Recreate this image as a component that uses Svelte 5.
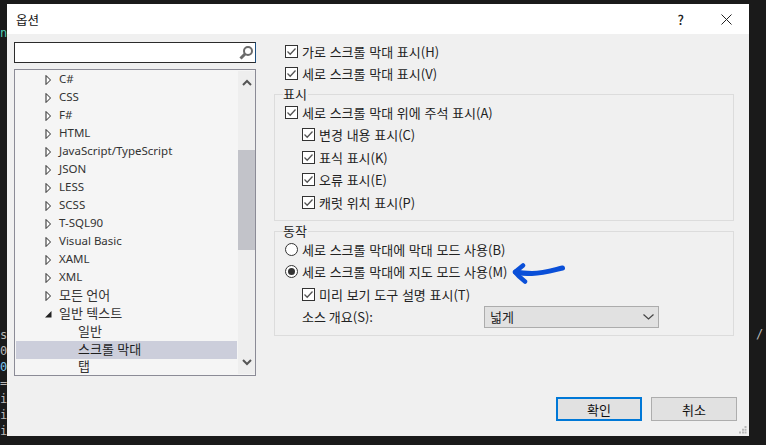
<script lang="ts">
  const languages = ['C#', 'CSS', 'F#', 'HTML', 'JavaScript/TypeScript', 'JSON', 'LESS', 'SCSS', 'T-SQL90', 'Visual Basic', 'XAML', 'XML'];
  const leftGutter = [
    { ch: 'n', y: 26, color: '#4ec9b0' },
    { ch: 's', y: 328, color: '#b8b8b8' },
    { ch: '0', y: 344, color: '#b8b8b8' },
    { ch: '0', y: 360, color: '#7cc4ee' },
    { ch: '=', y: 376, color: '#b8b8b8' },
    { ch: 'i', y: 392, color: '#b8b8b8' },
    { ch: 'i', y: 408, color: '#b8b8b8' },
    { ch: 'i', y: 424, color: '#b8b8b8' }
  ];
  const annotations = ['변경 내용 표시(C)', '표식 표시(K)', '오류 표시(E)', '캐럿 위치 표시(P)'];
</script>

{#snippet check()}
  <svg class="box" width="13" height="13" viewBox="0 0 13 13" aria-hidden="true">
    <rect x="0.5" y="0.5" width="12" height="12" fill="#fff" stroke="#333" />
    <path d="M2.5 6.5 L5.2 9.2 L10.5 3.5" fill="none" stroke="#555" stroke-width="1.3" />
  </svg>
{/snippet}

{#snippet radio(on: boolean)}
  <svg class="box" width="13" height="13" viewBox="0 0 13 13" aria-hidden="true">
    <circle cx="6.5" cy="6.5" r="6" fill="#fff" stroke="#333" />
    {#if on}<circle cx="6.5" cy="6.5" r="3.5" fill="#333" />{/if}
  </svg>
{/snippet}

{#snippet closedTri()}
  <svg class="tri" width="6" height="10" viewBox="0 0 6 10" aria-hidden="true">
    <path d="M0.5 0.5 L5 5 L0.5 9.5 Z" fill="#fff" stroke="#222" />
  </svg>
{/snippet}

<div class="screen">
  {#each leftGutter as g}
    <span class="gutter-ch" style="top: {g.y}px; color: {g.color}">{g.ch}</span>
  {/each}
  <span class="gutter-ch slash">/</span>

  <div class="dialog">
    <header class="titlebar">
      <span class="title">옵션</span>
      <span class="help">?</span>
      <svg class="close" width="11" height="11" viewBox="0 0 11 11" aria-hidden="true">
        <path d="M0.5 0.5 L10.5 10.5 M10.5 0.5 L0.5 10.5" stroke="#222" stroke-width="1" fill="none" />
      </svg>
    </header>

    <div class="body">
      <aside class="left">
        <div class="search">
          <svg width="16" height="16" viewBox="0 0 16 16" aria-hidden="true">
            <circle cx="10" cy="6" r="4" fill="none" stroke="#6b6b6b" stroke-width="2" />
            <path d="M7 9 L2.5 13.5" stroke="#6b6b6b" stroke-width="3" />
          </svg>
        </div>
        <div class="tree">
          <div class="rows">
            {#each languages as lang}
              <div class="row">
                {@render closedTri()}
                <span>{lang}</span>
              </div>
            {/each}
            <div class="row ko">
              {@render closedTri()}
              <span>모든 언어</span>
            </div>
            <div class="row ko">
              <svg class="tri" width="7" height="7" viewBox="0 0 7 7" aria-hidden="true">
                <path d="M6.5 0 V6.500 H0 Z" fill="#222" />
              </svg>
              <span>일반 텍스트</span>
            </div>
            <div class="row ko child"><span>일반</span></div>
            <div class="row ko child selected"><span>스크롤 막대</span></div>
            <div class="row ko child last"><span>탭</span></div>
          </div>
          <div class="scrollbar">
            <svg width="10" height="7" viewBox="0 0 10 7" aria-hidden="true">
              <path d="M1 6 L5 2 L9 6" fill="none" stroke="#555" stroke-width="2" />
            </svg>
            <div class="track"><div class="thumb"></div></div>
            <svg width="10" height="7" viewBox="0 0 10 7" aria-hidden="true">
              <path d="M1 1 L5 5 L9 1" fill="none" stroke="#555" stroke-width="2" />
            </svg>
          </div>
        </div>
      </aside>

      <main class="right">
        <div class="top-checks">
          <label class="opt">{@render check()}가로 스크롤 막대 표시(H)</label>
          <label class="opt">{@render check()}세로 스크롤 막대 표시(V)</label>
        </div>

        <fieldset class="group show">
          <legend>표시</legend>
          <label class="opt">{@render check()}세로 스크롤 막대 위에 주석 표시(A)</label>
          {#each annotations as text}
            <label class="opt sub">{@render check()}{text}</label>
          {/each}
        </fieldset>

        <fieldset class="group behavior">
          <legend>동작</legend>
          <label class="opt">{@render radio(false)}세로 스크롤 막대에 막대 모드 사용(B)</label>
          <label class="opt">{@render radio(true)}세로 스크롤 막대에 지도 모드 사용(M)</label>
          <label class="opt sub">{@render check()}미리 보기 도구 설명 표시(T)</label>
          <div class="source">
            <span class="source-label">소스 개요(S):</span>
            <div class="combo">
              <span>넓게</span>
              <svg width="11" height="6" viewBox="0 0 11 6" aria-hidden="true">
                <path d="M0.5 0.5 L5.5 5 L10.5 0.5" fill="none" stroke="#444" stroke-width="1.2" />
              </svg>
            </div>
          </div>
        </fieldset>

        <!-- hand-drawn note over the map mode row -->
        <svg class="scribble" width="54" height="22" viewBox="0 0 54 22" aria-hidden="true">
          <path d="M50.5 5 C42 7 32 10.500 20 10.500 C14 10.500 8 10 3.500 9" fill="none" stroke="#0a4fd8" stroke-width="5" stroke-linecap="round" />
          <path d="M11 2.500 C8 5 5.500 7 3 9 C5 11.500 8.500 15 13 18.500" fill="none" stroke="#0a4fd8" stroke-width="4.500" stroke-linecap="round" stroke-linejoin="round" />
        </svg>
      </main>
    </div>

    <footer class="actions">
      <button type="button" class="btn primary">확인</button>
      <button type="button" class="btn">취소</button>
    </footer>
    <svg class="grip" width="8" height="8" viewBox="0 0 8 8" aria-hidden="true">
      <path d="M5.500 0h2v2h-2zM3 2.750h2v2H3zM5.500 2.750h2v2h-2zM0 5.500h2v2H0zM3 5.500h2v2H3zM5.500 5.500h2v2h-2z" fill="#b9b9b9" />
    </svg>
  </div>
</div>

<style>
  :global(body) {
    margin: 0;
    background: #1a1a1a;
  }
  .screen {
    position: relative;
    width: 766px;
    height: 445px;
    padding: 4px 17px 9px 7px;
    box-sizing: border-box;
    overflow: hidden;
    background: #1a1a1a;
    font-family: 'Noto Sans CJK KR', 'Noto Sans', sans-serif;
    font-size: 13px;
    color: #1e1e1e;
  }
  .gutter-ch {
    position: absolute;
    left: 0;
    font-family: 'DejaVu Sans Mono', monospace;
    font-size: 12px;
    line-height: 14px;
  }
  .slash {
    left: 756px;
    top: 327px;
    color: #b8b8b8;
  }
  .dialog {
    position: relative;
    height: 100%;
    background: #f0f0f0;
    display: flex;
    flex-direction: column;
  }
  .titlebar {
    height: 30px;
    flex: none;
    background: #fff;
    display: flex;
    align-items: center;
    padding: 0 17px 0 9px;
  }
  .title {
    flex: 1;
    font-size: 12.5px;
    color: #111;
  }
  .help {
    margin-right: 37px;
    font-size: 13px;
    font-weight: 500;
    color: #222;
  }
  .body {
    flex: 1;
    min-height: 0;
    display: flex;
    padding: 6px 15px 0 7px;
    gap: 18px;
  }
  .left {
    width: 242px;
    flex: none;
    display: flex;
    flex-direction: column;
    gap: 6px;
    height: 334px;
    margin-top: 2px;
  }
  .search {
    height: 21px;
    flex: none;
    background: #fff;
    border: 1px solid #2b2b2b;
    border-right-color: #1c4f80;
    box-sizing: border-box;
    display: flex;
    justify-content: flex-end;
    align-items: center;
    padding-right: 1px;
  }
  .tree {
    flex: 1;
    min-height: 0;
    display: flex;
    border: 1px solid #8b8b96;
    padding: 1px 0 1px 1px;
    background: #f5f5f5;
  }
  .rows {
    flex: 1;
  }
  .row {
    height: 18px;
    line-height: 18px;
    display: flex;
    align-items: center;
    padding-left: 29px;
    font-family: 'Noto Sans', 'Noto Sans CJK KR', sans-serif;
    font-size: 11.5px;
    color: #333;
    white-space: nowrap;
  }
  .row span {
    padding-bottom: 2px;
    line-height: 16px;
  }
  .ko {
    font-size: 13px;
  }
  .tri {
    width: 7px;
    margin-right: 7px;
    flex: none;
  }
  .child {
    padding-left: 62px;
  }
  .selected {
    background: #cccedb;
    color: #1e1e1e;
  }
  .last {
    height: 16px;
  }
  .scrollbar {
    width: 17px;
    flex: none;
    margin-left: 1px;
    background: #eeeeee;
    display: flex;
    flex-direction: column;
    align-items: center;
    padding: 8px 0;
    box-sizing: border-box;
    gap: 5px;
  }
  .track {
    flex: 1;
    width: 100%;
    padding-top: 59px;
  }
  .thumb {
    height: 100px;
    background: #c2c3c9;
  }
  .right {
    position: relative;
    flex: 1;
    min-width: 0;
    display: flex;
    flex-direction: column;
  }
  .top-checks {
    padding-left: 11px;
    margin-bottom: 2px;
  }
  .opt {
    display: flex;
    align-items: center;
    height: 22.500px;
    white-space: nowrap;
    word-spacing: 0.8px;
    color: #222;
  }
  .box {
    flex: none;
    margin-right: 4px;
  }
  .sub {
    padding-left: 17px;
  }
  .group {
    margin: 0;
    border: 1px solid #dcdcdc;
    padding: 0 0 0 10px;
    min-width: 0;
    box-sizing: border-box;
  }
  .group legend {
    margin-left: -2px;
    padding: 0 1px 0 0;
    line-height: 14px;
    color: #222;
  }
  .show {
    height: 134px;
  }
  .behavior {
    height: 112px;
    margin-top: 3px;
  }
  .source {
    display: flex;
    align-items: center;
    height: 22px;
    padding-left: 17px;
  }
  .source-label {
    width: 182px;
    flex: none;
    color: #222;
  }
  .combo {
    width: 175px;
    height: 22px;
    box-sizing: border-box;
    border: 1px solid #acacac;
    background: #e1e1e1;
    display: flex;
    align-items: center;
    justify-content: space-between;
    padding: 0 4px 0 5px;
    color: #222;
  }
  .scribble {
    position: absolute;
    left: 238px;
    top: 223px;
  }
  .actions {
    position: absolute;
    right: 12px;
    bottom: 15px;
    display: flex;
    gap: 9px;
  }
  .btn {
    width: 86px;
    height: 24px;
    box-sizing: border-box;
    border: 1px solid #adadad;
    background: #e1e1e1;
    font: inherit;
    color: #111;
    padding: 0;
  }
  .primary {
    border: 2px solid #0078d7;
  }
  .grip {
    position: absolute;
    right: 2px;
    bottom: 2px;
  }
</style>
